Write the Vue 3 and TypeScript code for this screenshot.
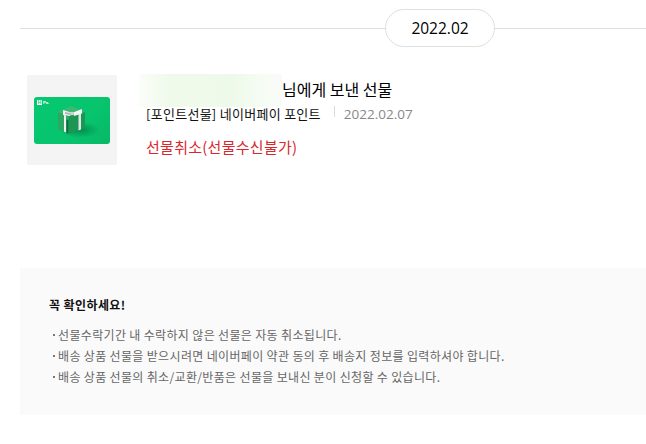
<script setup lang="ts">
const notices: string[] = [
  '선물수락기간 내 수락하지 않은 선물은 자동 취소됩니다.',
  '배송 상품 선물을 받으시려면 네이버페이 약관 동의 후 배송지 정보를 입력하셔야 합니다.',
  '배송 상품 선물의 취소/교환/반품은 선물을 보내신 분이 신청할 수 있습니다.',
]
</script>

<template>
  <div class="page">
    <div class="month-row">
      <span class="month-pill">2022.02</span>
    </div>

    <div class="gift">
      <div class="thumb">
        <div class="card">
          <span class="logo"><span class="logo-h">H</span><span class="logo-t">Pa.</span></span>
          <svg class="box" viewBox="0 0 76 47" aria-hidden="true">
            <defs>
              <radialGradient id="shadow" cx="0.5" cy="0.5" r="0.5">
                <stop offset="0" stop-color="#037f48" stop-opacity="0.8" />
                <stop offset="1" stop-color="#037f48" stop-opacity="0" />
              </radialGradient>
            </defs>
            <ellipse cx="46" cy="33" rx="20" ry="8" fill="url(#shadow)" />
            <path d="M24 15 L35 19 L35 37 L24 32 Z" fill="#2ba862" />
            <path d="M35 19 L51 15 L51 31 L35 37 Z" fill="#1c9654" />
            <path d="M24 15 L37 9 L51 15 L35 19 Z" fill="#3cb873" />
            <path d="M30 18 L32 18.6 L32 35.5 L30 34.5 Z" fill="#eef1ef" />
            <path d="M44.5 17 L47 16.3 L47 32.5 L44.5 33.4 Z" fill="#e2e5e3" />
            <path d="M32.5 23 L34.5 22.5 L34.5 36.7 L32.5 36 Z" fill="#0f6b3c" />
            <path d="M29 13 L37 15.5 L36 19 L29 18 Z" fill="#f2f3f2" />
            <path d="M48 12 L39 15.5 L40 19 L48 16.5 Z" fill="#f5f5f5" />
            <path d="M31 15 L37 16 L36 18 L31 17 Z" fill="#b5b9b6" />
            <circle cx="38" cy="16.5" r="1.8" fill="#cfd2d0" />
          </svg>
        </div>
      </div>

      <div class="info">
        <p class="title"><span class="name-slot"></span>님에게 보낸 선물</p>
        <p class="meta">
          <span class="product">[포인트선물] 네이버페이 포인트</span>
          <span class="sep"></span>
          <span class="date">2022.02.07</span>
        </p>
        <p class="status">선물취소(선물수신불가)</p>
        <span class="name-blur"></span>
      </div>
    </div>

    <section class="notice">
      <h3 class="notice-title">꼭 확인하세요!</h3>
      <ul class="notice-list">
        <li v-for="text in notices" :key="text">{{ text }}</li>
      </ul>
    </section>
  </div>
</template>

<style>
html, body { margin: 0; background: #fff; }
</style>

<style scoped>
.page {
  width: 646px;
  height: 444px;
  overflow: hidden;
  box-sizing: border-box;
  padding: 9px 0 0 20px;
  font-family: "Noto Sans CJK KR", "Noto Sans", sans-serif;
  color: #000;
}
.month-row {
  height: 38px;
  display: flex;
  align-items: center;
  padding-left: 365px;
  background: linear-gradient(#dfdfdf, #dfdfdf) 0 19px / 100% 1px no-repeat;
}
.month-pill {
  flex: none;
  box-sizing: border-box;
  width: 110px;
  height: 38px;
  line-height: 36px;
  text-align: center;
  font-size: 15.5px;
  font-family: "Open Sans", "Noto Sans", sans-serif;
  color: #000;
  background: #fff;
  border: 1px solid #dfdfdf;
  border-radius: 19px;
}
.gift {
  display: flex;
  margin: 28px 0 0 7px;
  height: 90px;
}
.thumb {
  width: 90px;
  height: 90px;
  background: #f4f4f4;
  display: flex;
  align-items: center;
  justify-content: center;
  flex: none;
}
.card {
  position: relative;
  width: 76px;
  height: 47px;
  border-radius: 3px;
  background: linear-gradient(135deg, #06c871 0%, #07c46d 60%, #08b867 100%);
  overflow: hidden;
}
.logo {
  position: absolute;
  left: 3px;
  top: 3px;
  display: flex;
  align-items: center;
  gap: 1px;
  color: #fff;
  line-height: 5px;
  z-index: 1;
}
.logo-h {
  width: 5px;
  height: 5px;
  background: #fff;
  color: #06c871;
  font: 700 5px/5px "Liberation Sans", sans-serif;
  text-align: center;
}
.logo-t {
  font: 700 4px/5px "Liberation Sans", sans-serif;
}
.box {
  display: block;
  width: 76px;
  height: 47px;
}
.info {
  position: relative;
  margin-left: 29px;
  flex: 1;
}
.title {
  margin: 2px 0 0;
  font-size: 16px;
  line-height: 24px;
  display: flex;
}
.name-slot {
  display: block;
  width: 136px;
  flex: none;
}
.name-blur {
  position: absolute;
  left: -7px;
  top: -1px;
  width: 143px;
  height: 33px;
  background: linear-gradient(90deg, rgba(240, 250, 236, 0.3), #f0faeb 20%, #eefae9 65%, #f7fcf5 90%, #f9fbf9);
}
.meta {
  margin: 3px 0 0;
  display: flex;
  align-items: center;
  height: 20px;
}
.product {
  font-size: 13px;
  line-height: 20px;
  letter-spacing: 0.28px;
  color: #111;
}
.sep {
  width: 1px;
  height: 11px;
  margin: -6px 9px 0 13px;
  background: #dcdcdc;
}
.date {
  font-size: 13.5px;
  line-height: 20px;
  font-family: "Open Sans", "Noto Sans", sans-serif;
  color: #888;
}
.status {
  margin: 12px 0 0;
  font-size: 15px;
  line-height: 22px;
  letter-spacing: 0.27px;
  color: #d9272e;
}
.notice {
  margin-top: 103px;
  height: 147px;
  box-sizing: border-box;
  padding: 28px 29px 0;
  background: #fafafa;
}
.notice-title {
  margin: 0;
  font-size: 12px;
  line-height: 18px;
  font-weight: 700;
  color: #111;
  letter-spacing: 0.4px;
}
.notice-list {
  list-style: none;
  margin: 10px 0 0;
  padding: 0 0 0 3px;
}
.notice-list li {
  position: relative;
  padding-left: 6px;
  font-size: 12px;
  line-height: 21px;
  color: #666;
  letter-spacing: 0.34px;
}
.notice-list li::before {
  content: "";
  position: absolute;
  left: 1px;
  top: 10px;
  width: 2px;
  height: 2px;
  background: #777;
}
</style>
